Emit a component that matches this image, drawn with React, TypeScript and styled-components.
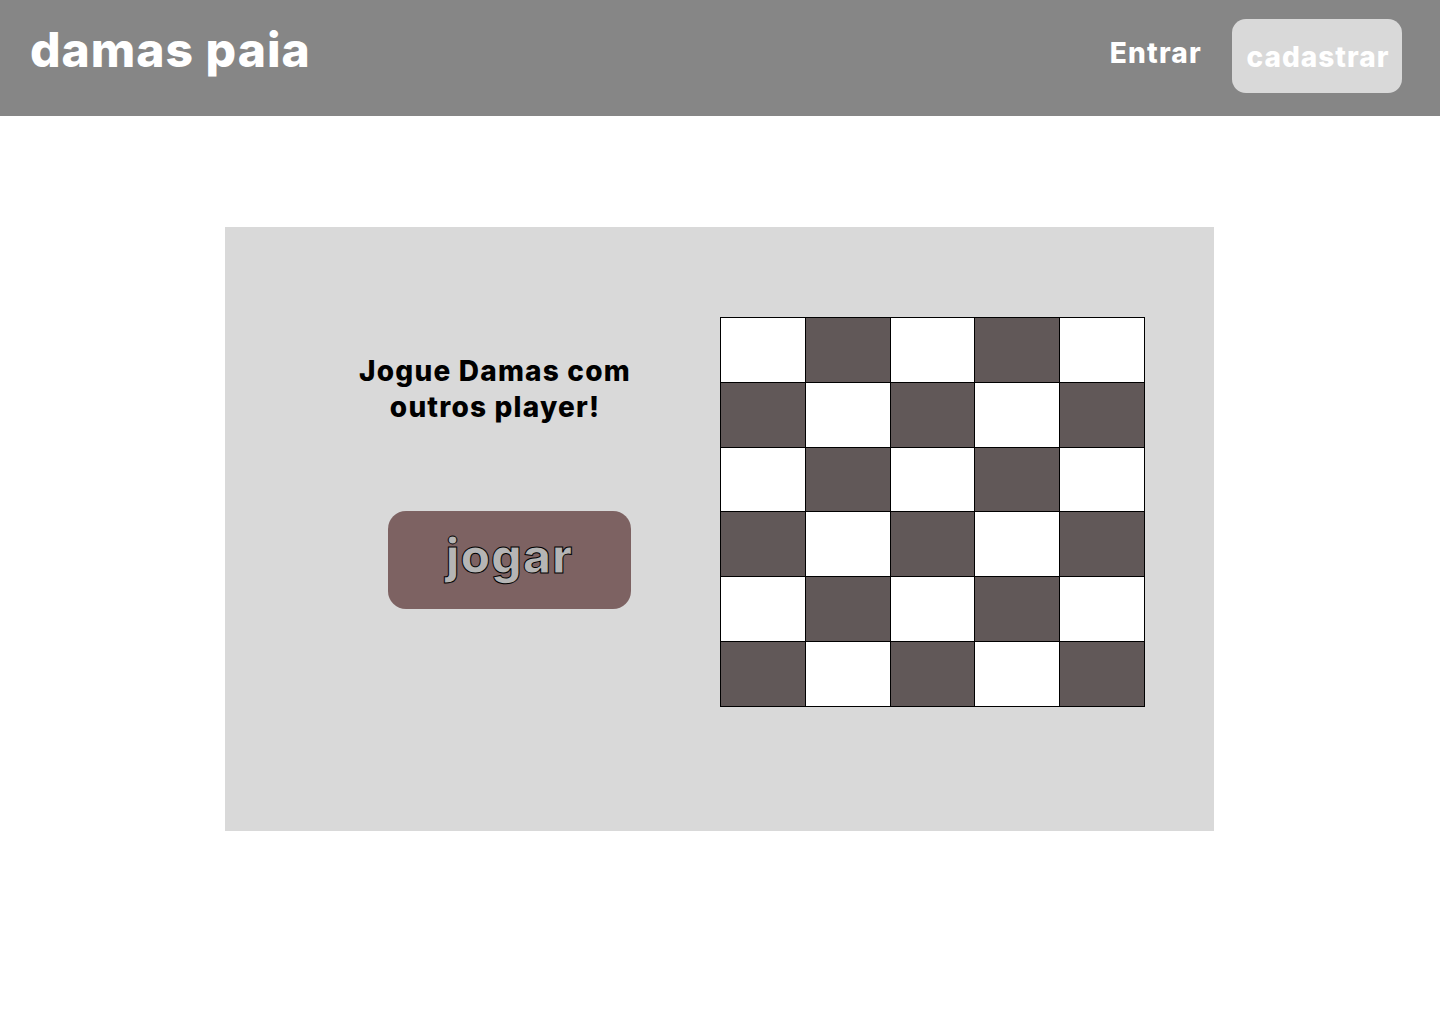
import React from "react";
import styled, { createGlobalStyle } from "styled-components";

const GlobalStyle = createGlobalStyle`
  html, body { margin: 0; padding: 0; background: #ffffff; }
  body { font-family: Inter, "Noto Sans", sans-serif; }
  * { box-sizing: border-box; }
`;

const Page = styled.div`
  width: 1440px;
  min-height: 1024px;
  background: #ffffff;
`;

const Header = styled.header`
  height: 116px;
  background: #868686;
  display: flex;
  align-items: flex-start;
  padding: 0 38px 0 30px;
`;

const Brand = styled.h1`
  margin: 26px 0 0;
  font-size: 48px;
  line-height: 48px;
  font-weight: 800;
  letter-spacing: 1px;
  color: #ffffff;
`;

const Nav = styled.nav`
  margin-left: auto;
  display: flex;
  align-items: flex-start;
  gap: 30px;
`;

const NavLink = styled.a`
  margin-top: 39px;
  font-size: 28px;
  line-height: 28px;
  font-weight: 800;
  letter-spacing: 1.2px;
  color: #ffffff;
  text-decoration: none;
`;

const SignUp = styled.button`
  margin-top: 19px;
  width: 170px;
  height: 74px;
  border: none;
  border-radius: 14px;
  background: #d9d9d9;
  color: #ffffff;
  font-family: inherit;
  font-size: 28px;
  line-height: 28px;
  font-weight: 800;
  letter-spacing: 1px;
  display: flex;
  align-items: center;
  justify-content: center;
  padding: 2px 0 0 2px;
`;

const Main = styled.main`
  display: flex;
  justify-content: center;
  padding: 111px 0 0 0;
`;

const Card = styled.section`
  width: 989px;
  height: 604px;
  margin-left: -1px;
  background: #d9d9d9;
  display: flex;
  align-items: flex-start;
  padding: 90px 0 0 134px;
  gap: 89px;
`;

const Intro = styled.div`
  width: 272px;
  display: flex;
  flex-direction: column;
  align-items: flex-end;
  padding-top: 36px;
`;

const Heading = styled.h2`
  align-self: stretch;
  margin: 0;
  text-align: center;
  font-size: 28px;
  line-height: 36px;
  font-weight: 800;
  letter-spacing: 1.2px;
  color: #000000;
  white-space: nowrap;
`;

const PlayButton = styled.button`
  margin-top: 86px;
  width: 243px;
  height: 98px;
  border: none;
  border-radius: 18px;
  background: #7d6262;
  color: #b5b5b5;
  font-family: inherit;
  font-size: 48px;
  line-height: 48px;
  font-weight: 800;
  letter-spacing: 1px;
  -webkit-text-stroke: 1px #000000;
  display: flex;
  align-items: center;
  justify-content: center;
  padding: 0 0 8px;
`;

const Board = styled.div`
  width: 425px;
  height: 390px;
  background: #000000;
  padding: 1px;
  display: grid;
  grid-template-columns: repeat(5, 1fr);
  grid-template-rows: repeat(6, 1fr);
  gap: 1px;
`;

const Square = styled.div<{ $dark: boolean }>`
  background: ${(p) => (p.$dark ? "#615858" : "#ffffff")};
`;

const cells = Array.from({ length: 30 }, (_, i) => {
  const r = Math.floor(i / 5);
  const c = i % 5;
  return (r + c) % 2 === 1;
});

export default function App() {
  return (
    <Page>
      <GlobalStyle />
      <Header>
        <Brand>damas paia</Brand>
        <Nav>
          <NavLink href="#">Entrar</NavLink>
          <SignUp>cadastrar</SignUp>
        </Nav>
      </Header>
      <Main>
        <Card>
          <Intro>
            <Heading>
              Jogue Damas com
              <br />
              outros player!
            </Heading>
            <PlayButton>jogar</PlayButton>
          </Intro>
          <Board>
            {cells.map((dark, i) => (
              <Square key={i} $dark={dark} />
            ))}
          </Board>
        </Card>
      </Main>
    </Page>
  );
}
